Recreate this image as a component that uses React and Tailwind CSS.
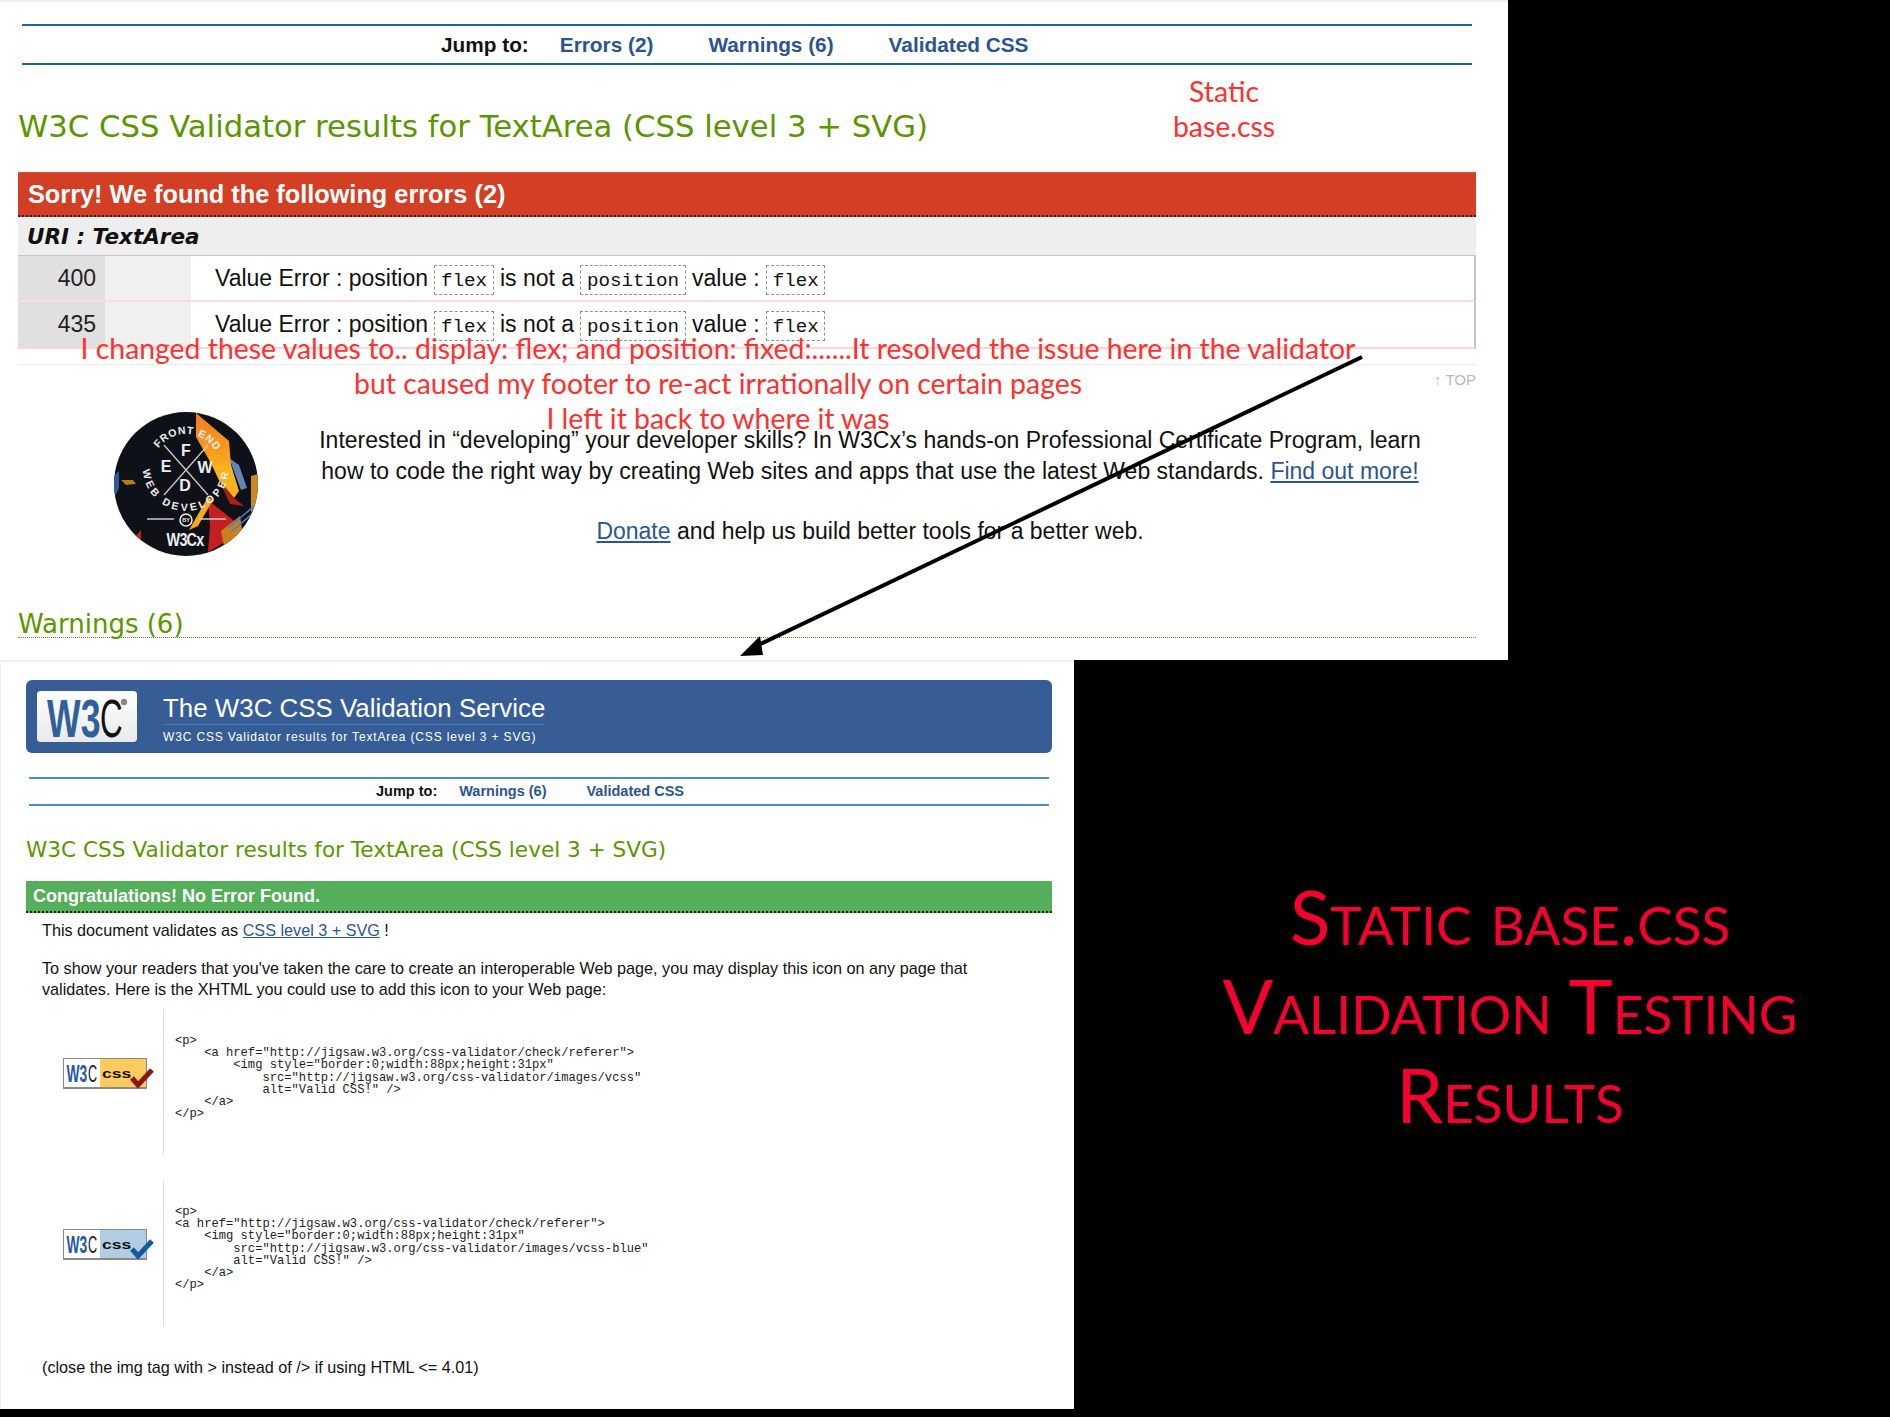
import React from "react";

const sans = "font-['Liberation_Sans',Arial,sans-serif]";
const verdana = "font-['DejaVu_Sans',Verdana,sans-serif]";
const lato = "font-['Lato',sans-serif]";
const mono = "font-['Liberation_Mono','Courier_New',monospace]";

const codeYellow = `<p>
    <a href="http://jigsaw.w3.org/css-validator/check/referer">
        <img style="border:0;width:88px;height:31px"
            src="http://jigsaw.w3.org/css-validator/images/vcss"
            alt="Valid CSS!" />
    </a>
</p>`;

const codeBlue = `<p>
<a href="http://jigsaw.w3.org/css-validator/check/referer">
    <img style="border:0;width:88px;height:31px"
        src="http://jigsaw.w3.org/css-validator/images/vcss-blue"
        alt="Valid CSS!" />
    </a>
</p>`;

const Code = ({ children }) => (
  <code className={`${mono} inline-flex items-center justify-center h-[30px] px-[5.5px] text-[19.2px] leading-none border border-dashed border-[#8f8f8f] align-middle pt-[3px]`}>
    {children}
  </code>
);

const ErrorRow = ({ line, last }) => (
  <div className={`grid grid-cols-[87px_86px_1fr] border-r-2 border-[#c4c4c4] border-b-2 ${last ? "h-[47px] border-b-[#ffd6d6]" : "h-[46px] border-b-[#fbdcdc]"}`}>
    <div className="bg-[#e0e0e0] text-right pr-[9px] text-[23px] leading-[44px] text-[#222]">{line}</div>
    <div className="bg-[#f0f0f0]" />
    <div className="pl-6 text-[23px] leading-[44px] text-[#111] whitespace-nowrap">
      Value Error : position <Code>flex</Code> is not a <Code>position</Code> value : <Code>flex</Code>
    </div>
  </div>
);

const FewdLogo = () => (
  <svg width="144" height="144" viewBox="0 0 144 144" className="shrink-0">
    <defs>
      <clipPath id="fewd">
        <circle cx="72" cy="72" r="72" />
      </clipPath>
      <linearGradient id="fewdOrange" x1="0" y1="0" x2="0" y2="1">
        <stop offset="0" stopColor="#f3791f" />
        <stop offset="1" stopColor="#fbb81c" />
      </linearGradient>
      <path id="ringTop" d="M38 56 A34 34 0 0 1 106 56" />
      <path id="ringBottom" d="M29 56 A43 43 0 0 0 115 56" />
    </defs>
    <g clipPath="url(#fewd)">
      <rect width="144" height="144" fill="#0e1118" />
      <polygon points="115,46 125,53 133,76 127,78" fill="#5f86b8" />
      <polygon points="82,1 115,29 117,53 105,68 98,53 82,25" fill="url(#fewdOrange)" />
      <polygon points="98,53 117,53 125,79 120,86 105,68" fill="#f7b21c" />
      <polygon points="105,68 120,86 130,94 116,92" fill="#a81f1c" />
      <polygon points="94,88 119,108 125,122 94,140 96,114" fill="#c42021" />
      <polygon points="75,118 94,85 99,88 84,114" fill="#f5a81c" />
      <polygon points="137,64 144,62 144,89 137,101" fill="#c98a1f" />
      <polygon points="107,119 126,104 129,123 110,134" fill="#c9801d" />
      <path d="M114 116 L144 91 M117 120 L144 97" stroke="#4d7fc0" strokeWidth="1.6" />
      <polygon points="0,64 5,59 5,76 0,86" fill="#2f5c9e" />
      <polygon points="7,68 19,68 22,72 12,73" fill="#b8791e" />
      <polygon points="20,126 27,118 27,136" fill="#c62020" />
      <path d="M50 33 L94 83 M94 33 L50 83" stroke="#c9c9c9" strokeWidth="1.3" />
      <g fill="#eee" fontFamily="Liberation Sans" fontWeight="700" textAnchor="middle">
        <text x="72" y="44" fontSize="16">F</text>
        <text x="52" y="60" fontSize="16">E</text>
        <text x="91" y="61" fontSize="16">W</text>
        <text x="71" y="79" fontSize="16">D</text>
        <text fontSize="10.5" letterSpacing="0.8" textAnchor="start">
          <textPath href="#ringTop" startOffset="21">FRONT END</textPath>
        </text>
        <text fontSize="10.5" letterSpacing="3" textAnchor="start">
          <textPath href="#ringBottom" startOffset="2">WEB DEVELOPER</textPath>
        </text>
        <text transform="translate(71 134) scale(0.8 1)" fontSize="18" letterSpacing="-1">W3Cx</text>
        <text x="72" y="110" fontSize="5.5">BY</text>
      </g>
      <path d="M33 107 H60 M85 107 H112" stroke="#c9c9c9" strokeWidth="1.3" />
      <circle cx="72" cy="108" r="6" fill="none" stroke="#eee" strokeWidth="1.5" />
    </g>
  </svg>
);

const W3cLogo = () => (
  <svg width="100" height="51" viewBox="0 0 100 51" className="shrink-0 rounded-[3px]">
    <defs>
      <linearGradient id="logoBg" x1="0" y1="0" x2="0" y2="1">
        <stop offset="0" stopColor="#ffffff" />
        <stop offset="1" stopColor="#e9e9e9" />
      </linearGradient>
    </defs>
    <rect width="100" height="51" rx="3" fill="url(#logoBg)" />
    <text transform="translate(10 46) scale(0.66 1)" fontSize="54" fontWeight="700" fontFamily="Liberation Sans" fill="#2f609c">W3</text>
    <text transform="translate(63 46) scale(0.58 1)" fontSize="54" fontFamily="Liberation Sans" fill="#111">C</text>
    <circle cx="87" cy="11" r="3.2" fill="#888" />
  </svg>
);

const ValidBadge = ({ fill, check }) => (
  <svg width="90" height="31" viewBox="0 0 90 31" className="overflow-visible shrink-0">
    <rect width="84" height="31" fill="#8a8a8a" />
    <rect x="1" y="1" width="36" height="28" fill="#fff" />
    <rect x="37" y="1" width="46" height="28" fill={fill} />
    <text transform="translate(3.5 24) scale(0.6 1)" fontSize="23" fontWeight="700" fontFamily="Liberation Sans" fill="#1f5aa8">W3</text>
    <text transform="translate(25 24) scale(0.55 1)" fontSize="23" fontFamily="Liberation Sans" fill="#222">C</text>
    <text transform="translate(39 20) scale(1.35 1)" fontSize="13" fontWeight="700" fontFamily="Liberation Sans" fill="#111">css</text>
    <path d="M69 20 L75 27 L89 12" fill="none" stroke={check} strokeWidth="5" />
  </svg>
);

const CodeRow = ({ fill, check, code, className }) => (
  <div className={`flex h-[146px] ${className}`}>
    <div className="w-[162px] pl-[62px] pt-[49px] shrink-0">
      <ValidBadge fill={fill} check={check} />
    </div>
    <pre className={`${mono} border-l border-[#ddd] pl-[11px] pt-[26px] text-[12.15px] leading-[12.2px] text-[#222]`}>{code}</pre>
  </div>
);

export default function App() {
  return (
    <div className={`${sans} relative w-[1890px] h-[1417px] bg-black overflow-hidden`}>
      {/* Top screenshot: errors */}
      <div className="w-[1508px] h-[660px] bg-white border-t-2 border-[#f0f0f0]">
        <div className="w-[1450px] ml-[22px] mt-[22px] h-[41px] border-y-2 border-[#1f659f] flex items-center pl-[419px] text-[20.8px] font-bold whitespace-nowrap">
          <span className="text-[#111] mr-[31px]">Jump to:</span>
          <span className="text-[#2a5590] mr-[55px]">Errors (2)</span>
          <span className="text-[#2a5590] mr-[55px]">Warnings (6)</span>
          <span className="text-[#2a5590]">Validated CSS</span>
        </div>

        <h1 className={`${verdana} h-[107px] pl-[18px] pt-[40px] text-[30.7px] leading-[44px] font-normal text-[#5b9600] whitespace-nowrap`}>
          W3C CSS Validator results for TextArea (CSS level 3 + SVG)
        </h1>

        <div className="w-[1458px] ml-[18px]">
          <div className="h-[45px] bg-[#d23f24] border-t border-[#e0604a] border-b-2 border-b-[#222] border-dotted pl-[10px] text-white font-bold text-[25.3px] leading-[42px]">
            Sorry! We found the following errors (2)
          </div>
          <div className={`${verdana} h-[39px] bg-[#eeeeee] border-b border-[#c8c8c8] pl-[9px] text-[21.5px] leading-[39px] font-bold italic text-[#111]`}>
            URI : TextArea
          </div>
          <ErrorRow line="400" />
          <ErrorRow line="435" last />
          <div className="mt-[15px] border-t border-[#ebebf5] flex justify-end pt-[5px] text-[15px] leading-[20px] text-[#b4b8cc]">
            ↑ TOP
          </div>
          <div className="flex mt-[22px] pl-[96px]">
            <FewdLogo />
            <div className="w-[1164px] ml-[30px] text-center text-[23px] leading-[30.5px] text-[#111] pt-[13px]">
              <p className="whitespace-nowrap">Interested in “developing” your developer skills? In W3Cx’s hands-on Professional Certificate Program, learn</p>
              <p className="whitespace-nowrap">
                how to code the right way by creating Web sites and apps that use the latest Web standards.{" "}
                <span className="text-[#2a5590] underline">Find out more!</span>
              </p>
              <p className="mt-[30px]">
                <span className="text-[#2a5590] underline">Donate</span> and help us build better tools for a better web.
              </p>
            </div>
          </div>
          <h2 className={`${verdana} mt-[52px] h-[30px] border-b border-dotted border-[#6f8a3a] text-[26px] leading-[32px] font-normal text-[#5b9600]`}>
            Warnings (6)
          </h2>
        </div>
      </div>

      <div className="flex">
        {/* Bottom screenshot: no errors */}
        <div className="w-[1074px] h-[749px] bg-white border-t-2 border-l border-[#f0f0f0]">
          <div className="ml-[25px] mt-[18px] w-[1026px] h-[73px] bg-[#365d95] rounded-md flex items-center pl-[11px] text-white">
            <W3cLogo />
            <div className="ml-[26px] pt-[8px]">
              <div className="text-[25.9px] leading-[32px] border-b border-[#5277ab] whitespace-nowrap">The W3C CSS Validation Service</div>
              <div className="text-[12px] leading-[24px] tracking-[0.85px] whitespace-nowrap">W3C CSS Validator results for TextArea (CSS level 3 + SVG)</div>
            </div>
          </div>

          <div className="ml-[28px] mt-[24px] w-[1020px] h-[29px] border-y-2 border-[#4c8cc2] flex items-center pl-[347px] text-[14.5px] font-bold whitespace-nowrap">
            <span className="text-[#111] mr-[22px]">Jump to:</span>
            <span className="text-[#2a5590] mr-[40px]">Warnings (6)</span>
            <span className="text-[#2a5590]">Validated CSS</span>
          </div>

          <h1 className={`${verdana} h-[75px] ml-[25px] pt-[30px] text-[21.6px] leading-[28px] font-normal text-[#5b9600] whitespace-nowrap`}>
            W3C CSS Validator results for TextArea (CSS level 3 + SVG)
          </h1>

          <div className="ml-[25px] w-[1026px] h-[32px] bg-[#55ae5a] border-b-2 border-dotted border-b-[#222] pl-[7px] text-white font-bold text-[18px] leading-[31px]">
            Congratulations! No Error Found.
          </div>

          <div className="pl-[41px] text-[16.2px] text-[#111]">
            <p className="leading-[21px] mt-[7px]">
              This document validates as <span className="text-[#2a5590] underline">CSS level 3 + SVG</span> !
            </p>
            <p className="leading-[21px] mt-[17px] w-[985px]">
              To show your readers that you've taken the care to create an interoperable Web page, you may display this icon on any page that validates. Here is the XHTML you could use to add this icon to your Web page:
            </p>
          </div>

          <CodeRow fill="#ffcb5e" check="#8f1414" code={codeYellow} className="mt-[9px]" />
          <CodeRow fill="#b2cde3" check="#125c9e" code={codeBlue} className="mt-[25px]" />

          <p className="pl-[41px] mt-[31px] text-[16.2px] leading-[21px] text-[#111]">
            (close the img tag with &gt; instead of /&gt; if using HTML &lt;= 4.01)
          </p>
        </div>

        <div className={`${lato} flex-1 h-[749px] pl-[56px] text-center text-[#f5002f] text-[75px] leading-[89px] [font-variant:small-caps] pt-[212px]`}>
          <p>Static base.css</p>
          <p>Validation Testing</p>
          <p>Results</p>
        </div>
      </div>

      {/* Annotations drawn over the screenshots */}
      <div className={`${lato} absolute left-[1100px] top-[74px] w-[248px] text-center text-[#ff3030] text-[28.4px] leading-[34.5px]`}>
        Static<br />base.css
      </div>
      <div className={`${lato} absolute left-[18px] top-[331px] w-[1400px] text-center text-[#ff3030] text-[28.4px] leading-[35px] whitespace-nowrap`}>
        <p>I changed these values to.. display: flex; and position: fixed:......It resolved the issue here in the validator</p>
        <p>but caused my footer to re-act irrationally on certain pages</p>
        <p>I left it back to where it was</p>
      </div>
      <svg className="absolute left-0 top-0 pointer-events-none" width="1890" height="1417">
        <line x1="1362" y1="357" x2="752" y2="648" stroke="#000" strokeWidth="4" />
        <polygon points="740,656 760,636 763,655" fill="#000" />
      </svg>
    </div>
  );
}
